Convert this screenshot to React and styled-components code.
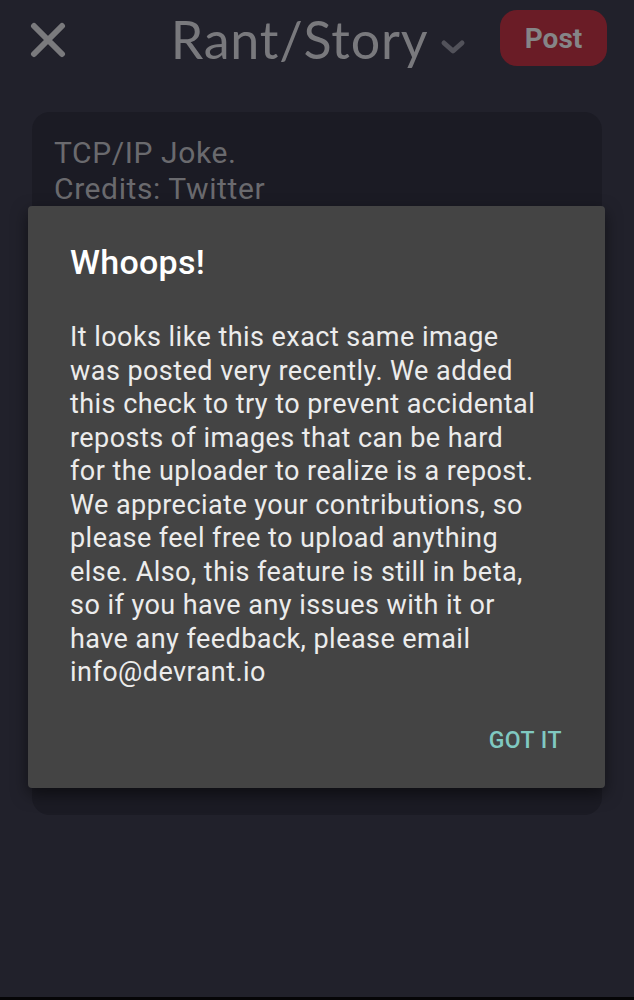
import React from 'react';
import styled, { createGlobalStyle } from 'styled-components';

const GlobalStyle = createGlobalStyle`
    html, body {
        margin: 0;
        padding: 0;
        background: #21212b;
        font-family: Roboto, "Liberation Sans", sans-serif;
    }
`;

const Screen = styled.div`
    position: relative;
    width: 634px;
    height: 1000px;
    overflow: hidden;
    background: #21212b;
    display: flex;
    flex-direction: column;
`;

const TopBar = styled.header`
    height: 84px;
    display: grid;
    grid-template-columns: 1fr auto 1fr;
    align-items: center;
    padding: 0 27px 0 26px;
    box-sizing: border-box;
`;

const CloseButton = styled.div`
    width: 44px;
    height: 44px;
    display: flex;
    align-items: center;
    justify-content: center;
    margin-top: -4px;
    justify-self: start;
`;

const TitleWrap = styled.div`
    display: flex;
    align-items: center;
    gap: 12px;
    margin-top: -6px;
    margin-left: 4px;
`;

const Title = styled.span`
    font-family: Lato, "Open Sans", sans-serif;
    font-size: 52px;
    color: #79797d;
    letter-spacing: 0.8px;
`;

const PostButton = styled.div`
    justify-self: end;
    width: 107px;
    height: 56px;
    border-radius: 17px;
    background: #6a1c26;
    color: #858587;
    font-size: 28px;
    font-weight: 700;
    display: flex;
    align-items: center;
    justify-content: center;
    margin-top: -8px;
`;

const Card = styled.div`
    margin: 28px 32px 0 32px;
    height: 703px;
    border-radius: 18px;
    background: #1b1b24;
    padding: 23px 22px;
    box-sizing: border-box;
`;

const CardText = styled.p`
    margin: 0;
    font-size: 30px;
    line-height: 36px;
    letter-spacing: 0.6px;
    color: #6a6a6e;
`;

const BottomEdge = styled.div`
    margin-top: auto;
    height: 3px;
    background: #050507;
`;

const Dialog = styled.div`
    position: absolute;
    left: 28px;
    top: 206px;
    width: 577px;
    height: 582px;
    background: #444444;
    border-radius: 4px;
    box-shadow: 0 6px 16px rgba(0, 0, 0, 0.5);
    box-sizing: border-box;
    padding: 36px 40px 0 42px;
    display: flex;
    flex-direction: column;
`;

const DialogTitle = styled.h2`
    margin: 0;
    font-size: 34px;
    font-weight: 500;
    color: #ffffff;
    line-height: 40px;
    letter-spacing: 0.3px;
`;

const DialogBody = styled.div`
    margin-top: 39px;
    font-size: 27px;
    line-height: 33.5px;
    letter-spacing: 0.45px;
    color: #ececec;
`;

const Line = styled.span`
    display: block;
    white-space: nowrap;
`;

const Actions = styled.div`
    display: flex;
    justify-content: flex-end;
    margin-top: 37px;
    padding-right: 3px;
`;

const GotIt = styled.span`
    font-size: 23px;
    font-weight: 500;
    color: #80c9c1;
    letter-spacing: 0.5px;
`;

const lines = [
    'It looks like this exact same image',
    'was posted very recently. We added',
    'this check to try to prevent accidental',
    'reposts of images that can be hard',
    'for the uploader to realize is a repost.',
    'We appreciate your contributions, so',
    'please feel free to upload anything',
    'else. Also, this feature is still in beta,',
    'so if you have any issues with it or',
    'have any feedback, please email',
    'info@devrant.io',
];

export default function App() {
    return (
        <Screen>
            <GlobalStyle />
            <TopBar>
                <CloseButton>
                    <svg width="36" height="36" viewBox="0 0 36 36">
                        <path d="M4 4 L32 32 M32 4 L4 32" stroke="#7a7a7d" strokeWidth="6" strokeLinecap="round" />
                    </svg>
                </CloseButton>
                <TitleWrap>
                    <Title>Rant/Story</Title>
                    <svg width="26" height="16" viewBox="0 0 26 16" style={{ marginTop: 16 }}>
                        <path d="M4 4 L13 12 L22 4" stroke="#52525a" strokeWidth="5" fill="none" strokeLinecap="round" strokeLinejoin="round" />
                    </svg>
                </TitleWrap>
                <PostButton>Post</PostButton>
            </TopBar>

            <Card>
                <CardText>TCP/IP Joke.</CardText>
                <CardText>Credits: Twitter</CardText>
            </Card>

            <BottomEdge />

            <Dialog>
                <DialogTitle>Whoops!</DialogTitle>
                <DialogBody>
                    {lines.map((l) => (
                        <Line key={l}>{l}</Line>
                    ))}
                </DialogBody>
                <Actions>
                    <GotIt>GOT IT</GotIt>
                </Actions>
            </Dialog>
        </Screen>
    );
}
